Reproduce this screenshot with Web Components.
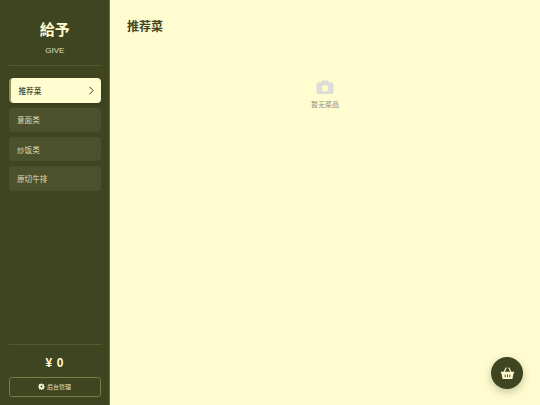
<!DOCTYPE html>
<html lang="zh"><head><meta charset="utf-8"><style>
html,body{margin:0;height:100%;overflow:hidden}
body{font-family:"Noto Sans CJK SC","Liberation Sans",sans-serif;background:#fffdd0}
</style></head><body>
<app-shell>
  <side-bar slot="side" brand="給予" sub="GIVE">
    <cat-item active>推荐菜</cat-item>
    <cat-item>意面类</cat-item>
    <cat-item>炒饭类</cat-item>
    <cat-item>原切牛排</cat-item>
  </side-bar>
  <menu-panel slot="main" heading="推荐菜"></menu-panel>
</app-shell>
<cart-fab></cart-fab>
<script>
const def=(n,html)=>{customElements.define(n,class extends HTMLElement{
  connectedCallback(){ if(this.shadowRoot)return; const r=this.attachShadow({mode:'open'});
    r.innerHTML=html.replace(/\{\{(\w+)\}\}/g,(m,k)=>this.getAttribute(k)||''); }
});};
def('app-shell',`<style>:host{display:flex;width:540px;height:405px}
::slotted([slot=side]){flex:0 0 110px}::slotted([slot=main]){flex:1}</style>
<slot name="side"></slot><slot name="main"></slot>`);
def('side-bar',`<style>
:host{display:flex;flex-direction:column;box-sizing:border-box;height:405px;background:#3f4421;border-right:1px solid #6b703c;padding:0 8px 8.5px 8.5px;color:#fffdd0}
header{text-align:center;height:65.5px;box-sizing:border-box;border-bottom:1px solid #565b31;padding-top:17px}
h1{margin:0;font-size:15px;line-height:24px;font-weight:700}
p{margin:5px 0 0;font:8px/10px "Liberation Sans",sans-serif;color:#e2e1c0}
nav{flex:1;display:flex;flex-direction:column;gap:4.6px;padding-top:12.5px}
footer{border-top:1px solid #565b31;text-align:center}
.t{font:700 12px/16px "Liberation Sans","Noto Sans CJK SC",sans-serif;margin:10px 0 6px;letter-spacing:.6px}
</style><header><h1>{{brand}}</h1><p>{{sub}}</p></header>
<nav><slot></slot></nav>
<footer><div class="t">¥ 0</div><admin-btn></admin-btn></footer>`);
customElements.define('cat-item',class extends HTMLElement{connectedCallback(){if(this.shadowRoot)return;
 const a=this.hasAttribute('active');const r=this.attachShadow({mode:'open'});
 r.innerHTML=`<style>:host{display:flex;align-items:center;justify-content:space-between;box-sizing:border-box;height:${a?25:24.6}px;border-radius:4px;font-size:7.6px;
 ${a?'background:#fffdd0;color:#3f4421;font-weight:500;border-left:2px solid #8f9450;padding:0 6px 0 8px;box-shadow:0 1px 3px rgba(0,0,0,.2)':'background:#4c512d;color:#dfdebd;padding:0 8.5px'}}
 svg{display:block}</style><span><slot></slot></span>${a?'<svg width="7" height="9" viewBox="0 0 7 9"><path d="M1.500 .8 5.200 4.500 1.500 8.200" fill="none" stroke="#3f4421" stroke-width="1"/></svg>':''}`;}});
def('admin-btn',`<style>:host{display:flex;align-items:center;justify-content:center;gap:1.5px;box-sizing:border-box;height:20px;border:1px solid #777c4a;border-radius:3px;color:#e2e1c0;font-size:6px}
svg{display:block}</style><svg width="7" height="7" viewBox="-1 -1 18 18"><path fill="#fffdd0" fill-rule="evenodd" d="M6.600 0h2.800l.4 2.200 1.300.6 1.900-1.300 2 2-1.300 1.900.6 1.300 2.200.4v2.800l-2.200.4-.6 1.300 1.300 1.900-2 2-1.900-1.300-1.300.6-.4 2.200H6.600l-.4-2.200-1.300-.6-1.900 1.300-2-2 1.300-1.900-.6-1.300L-.5 9.400V6.600l2.200-.4.6-1.300L1 3l2-2 1.900 1.300 1.300-.6zM8 5.500a2.500 2.500 0 1 0 0 5 2.500 2.500 0 0 0 0-5z"/></svg><span>后台管理</span>`);
def('menu-panel',`<style>:host{display:block;padding:16px 17px;color:#3f4421}
h2{margin:0;font-size:12px;line-height:20px;font-weight:700}
.e{display:flex;flex-direction:column;align-items:center;margin-top:43px;color:#8f8f80;font-size:7px;gap:4px}
svg{display:block}</style><h2>{{heading}}</h2>
<div class="e"><svg width="18" height="16" viewBox="0 0 18 16"><path fill="#dcdcd8" fill-rule="evenodd" d="M6 1.500h6l1.200 2H16a1.500 1.500 0 0 1 1.500 1.500v8.500A1.500 1.500 0 0 1 16 15H2a1.500 1.500 0 0 1-1.500-1.500V5A1.500 1.500 0 0 1 2 3.500h2.800zM9 6a3.200 3.200 0 1 0 0 6.400A3.200 3.200 0 0 0 9 6z"/></svg><span>暂无菜品</span></div>`);
def('cart-fab',`<style>:host{position:fixed;right:17px;bottom:16px;width:32px;height:32px;border-radius:50%;background:#3f4421;display:flex;align-items:center;justify-content:center;box-shadow:0 3px 8px rgba(61,63,31,.3)}
svg{display:block}</style><svg width="15" height="13" viewBox="0 0 16 14"><path d="M4 6 6.500 1M12 6 9.500 1" stroke="#fffdd0" stroke-width="1.200" fill="none" stroke-linecap="round"/><path fill="#fffdd0" fill-rule="evenodd" d="M.8 5.200h14.400v1.600h-.7L13.300 13H2.700L1.500 6.800H.8zM5 8v3h1V8zm2.500 0v3h1V8zM10 8v3h1V8z"/></svg>`);
</script></body></html>
